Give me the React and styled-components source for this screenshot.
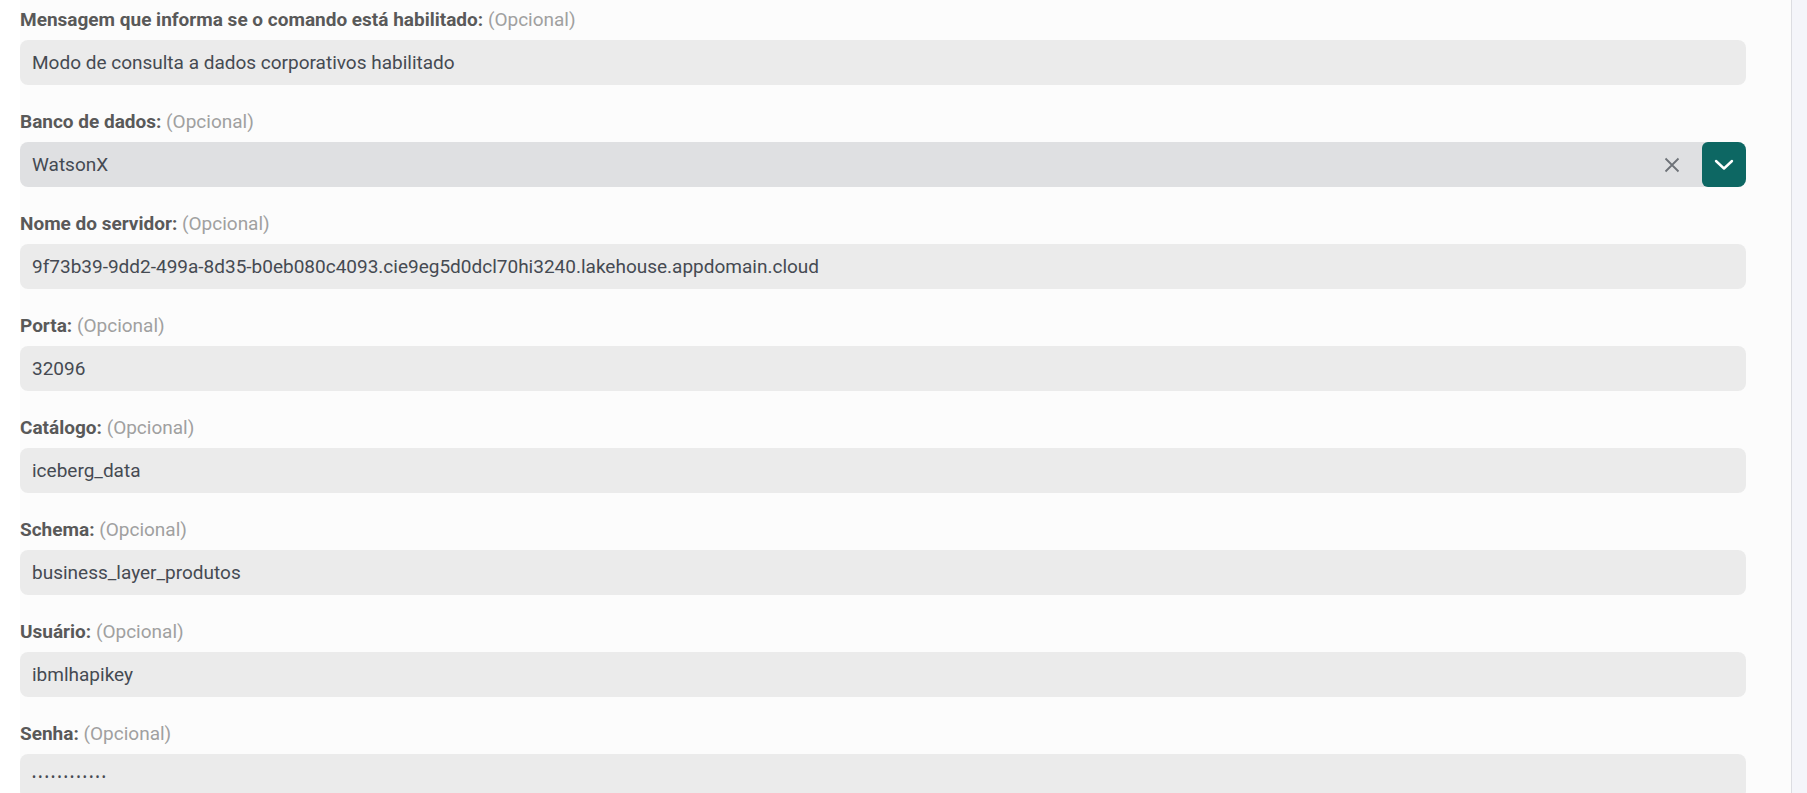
import React from 'react'
import styled, { createGlobalStyle } from 'styled-components'

const GlobalStyle = createGlobalStyle`
    html, body {
        margin: 0;
        padding: 0;
        background: #ffffff;
        font-family: Roboto, "Liberation Sans", Arial, sans-serif;
        overflow: hidden;
    }
`

const fields = [
    { label: 'Mensagem que informa se o comando está habilitado:', value: 'Modo de consulta a dados corporativos habilitado' },
    { label: 'Banco de dados:', value: 'WatsonX', select: true },
    { label: 'Nome do servidor:', value: '9f73b39-9dd2-499a-8d35-b0eb080c4093.cie9eg5d0dcl70hi3240.lakehouse.appdomain.cloud' },
    { label: 'Porta:', value: '32096' },
    { label: 'Catálogo:', value: 'iceberg_data' },
    { label: 'Schema:', value: 'business_layer_produtos' },
    { label: 'Usuário:', value: 'ibmlhapikey' },
    { label: 'Senha:', value: 'abcdefghijkl', password: true },
]

const App = () => {
    return (
        <>
            <GlobalStyle />
            <Page>
                <Gutter />
                <Form>
                    {fields.map(f => (
                        <Field key={f.label}>
                            <Label>
                                {f.label} <Optional>(Opcional)</Optional>
                            </Label>
                            {f.select ? (
                                <SelectBox>
                                    <SelectValue>{f.value}</SelectValue>
                                    <ClearButton>
                                        <svg width="16" height="16" viewBox="0 0 16 16">
                                            <path d="M1.5 1.5 L14.5 14.5 M14.5 1.5 L1.5 14.5" stroke="#6e7278" strokeWidth="1.8" fill="none" />
                                        </svg>
                                    </ClearButton>
                                    <ToggleButton>
                                        <svg width="20" height="12" viewBox="0 0 20 12">
                                            <path d="M2 2 L10 9.5 L18 2" stroke="#ffffff" strokeWidth="2.4" fill="none" strokeLinecap="round" strokeLinejoin="round" />
                                        </svg>
                                    </ToggleButton>
                                </SelectBox>
                            ) : (
                                <Input
                                    type={f.password ? 'password' : 'text'}
                                    value={f.value}
                                    readOnly
                                    $password={f.password}
                                />
                            )}
                        </Field>
                    ))}
                </Form>
                <Sidebar />
            </Page>
        </>
    )
}

const Page = styled.div`
    display: flex;
    width: 100%;
    height: 793px;
    overflow: hidden;
`

const Gutter = styled.div`
    width: 20px;
    flex-shrink: 0;
    background: #ffffff;
`

const Form = styled.div`
    flex: 1;
    background: #fcfcfc;
    padding: 8px 45px 0 0;
    display: flex;
    flex-direction: column;
    gap: 25px;
`

const Sidebar = styled.div`
    width: 15px;
    flex-shrink: 0;
    background: #f4f5fa;
    border-left: 1px solid #dcdde2;
`

const Field = styled.div`
    display: flex;
    flex-direction: column;
`

const Label = styled.div`
    font-size: 19px;
    line-height: 24px;
    height: 24px;
    font-weight: 700;
    color: #595959;
    margin-bottom: 8px;
`

const Optional = styled.span`
    font-weight: 400;
    color: #a0a0a0;
`

const Input = styled.input`
    box-sizing: border-box;
    height: 45px;
    width: 100%;
    border: none;
    outline: none;
    border-radius: 8px;
    background: #ebebeb;
    padding: 0 12px;
    font-family: Roboto, "Liberation Sans", Arial, sans-serif;
    font-size: ${p => (p.$password ? '12px' : '19px')};
    letter-spacing: ${p => (p.$password ? '2.3px' : 'normal')};
    color: #454a52;
`

const SelectBox = styled.div`
    display: flex;
    align-items: stretch;
    height: 45px;
    border-radius: 8px;
    overflow: hidden;
    background: #dfe0e2;
`

const SelectValue = styled.div`
    flex: 1;
    display: flex;
    align-items: center;
    padding-left: 12px;
    font-size: 19px;
    color: #454a52;
`

const ClearButton = styled.div`
    width: 64px;
    display: flex;
    align-items: center;
    justify-content: center;
`

const ToggleButton = styled.div`
    width: 44px;
    background: #0d6763;
    display: flex;
    align-items: center;
    justify-content: center;
    border-radius: 6px 0 0 6px;
    margin-left: -2px;
`

export default App
